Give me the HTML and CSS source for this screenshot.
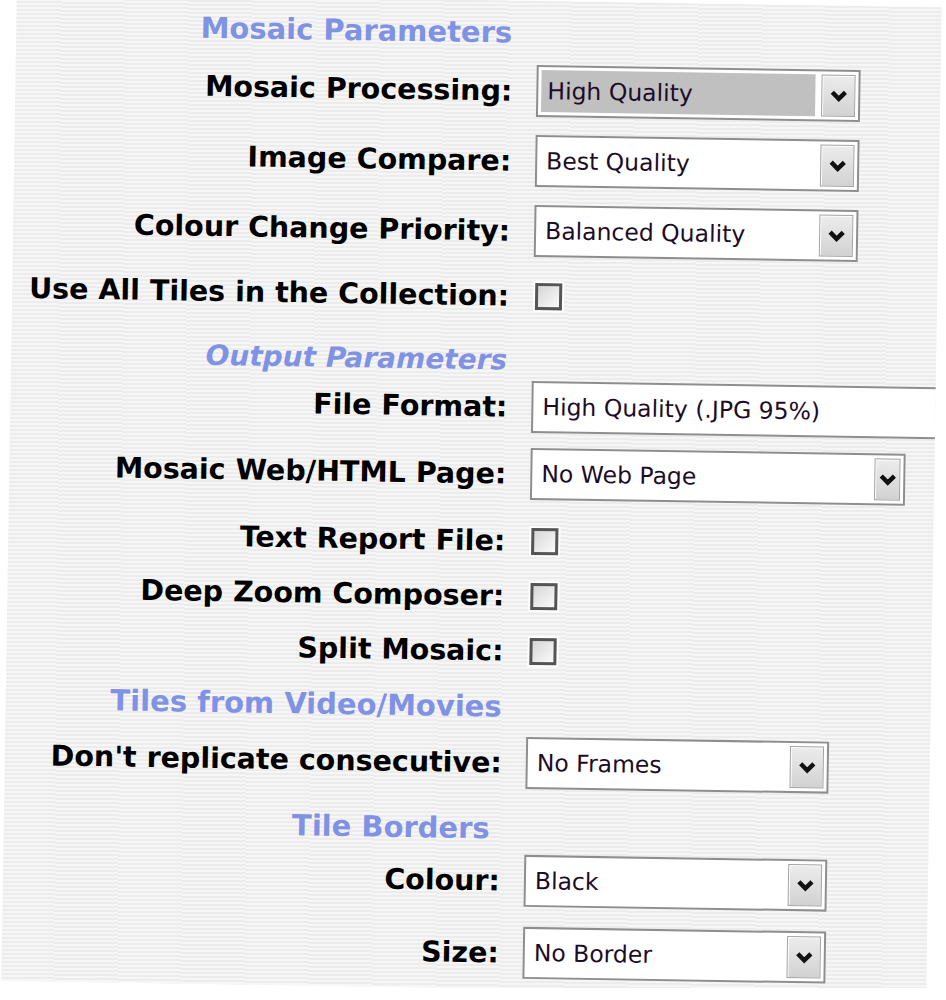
FILE: index.html
```html
<!DOCTYPE html>
<html lang="en">

<head>
    <meta charset="UTF-8">
    <meta name="viewport" content="width=device-width, initial-scale=1.0">
    <title>Mosaic Settings</title>

    <link rel="stylesheet" href="styles.css">
</head>

<body>
    <div class="panel">
        <h2 class="section first">Mosaic Parameters</h2>

        <div class="row r1">
            <label class="label">Mosaic Processing:</label>
            <div class="select focused w323">
                <span class="value">High Quality</span>
                <span class="arrow"><svg viewBox="0 0 16 16"><path d="M3 5 L8 10 L13 5" /></svg></span>
            </div>
        </div>

        <div class="row r2">
            <label class="label">Image Compare:</label>
            <div class="select w323">
                <span class="value">Best Quality</span>
                <span class="arrow"><svg viewBox="0 0 16 16"><path d="M3 5 L8 10 L13 5" /></svg></span>
            </div>
        </div>

        <div class="row r3">
            <label class="label">Colour Change Priority:</label>
            <div class="select w323">
                <span class="value">Balanced Quality</span>
                <span class="arrow"><svg viewBox="0 0 16 16"><path d="M3 5 L8 10 L13 5" /></svg></span>
            </div>
        </div>

        <div class="row check r4">
            <label class="label">Use All Tiles in the Collection:</label>
            <span class="checkbox"></span>
        </div>

        <h2 class="section italic h2">Output Parameters</h2>

        <div class="row r5">
            <label class="label">File Format:</label>
            <div class="textbox">
                <span class="value">High Quality (.JPG 95%)</span>
            </div>
        </div>

        <div class="row r6">
            <label class="label">Mosaic Web/HTML Page:</label>
            <div class="select narrow w375">
                <span class="value">No Web Page</span>
                <span class="arrow"><svg viewBox="0 0 16 16"><path d="M3 5 L8 10 L13 5" /></svg></span>
            </div>
        </div>

        <div class="row check r7">
            <label class="label">Text Report File:</label>
            <span class="checkbox"></span>
        </div>

        <div class="row check r8">
            <label class="label">Deep Zoom Composer:</label>
            <span class="checkbox"></span>
        </div>

        <div class="row check r9">
            <label class="label">Split Mosaic:</label>
            <span class="checkbox"></span>
        </div>

        <h2 class="section h3">Tiles from Video/Movies</h2>

        <div class="row r10">
            <label class="label">Don't replicate consecutive:</label>
            <div class="select w303">
                <span class="value">No Frames</span>
                <span class="arrow"><svg viewBox="0 0 16 16"><path d="M3 5 L8 10 L13 5" /></svg></span>
            </div>
        </div>

        <h2 class="section h4">Tile Borders</h2>

        <div class="row r11">
            <label class="label">Colour:</label>
            <div class="select w303">
                <span class="value">Black</span>
                <span class="arrow"><svg viewBox="0 0 16 16"><path d="M3 5 L8 10 L13 5" /></svg></span>
            </div>
        </div>

        <div class="row r12">
            <label class="label">Size:</label>
            <div class="select w303">
                <span class="value">No Border</span>
                <span class="arrow"><svg viewBox="0 0 16 16"><path d="M3 5 L8 10 L13 5" /></svg></span>
            </div>
        </div>
    </div>
</body>

</html>
```

FILE: styles.css
```css
body {
    margin: 0;
    background: #fff;
    overflow: hidden;
    font-family: 'DejaVu Sans', Verdana, sans-serif;
}

.panel {
    width: 925px;
    height: 988px;
    margin-left: 9px;
    overflow: hidden;
    background: repeating-linear-gradient(to bottom, #ececec 0, #ececec 2px, #f6f6f6 2px, #f6f6f6 4px);
    transform: rotate(0.9deg);
}

.section {
    margin: 0;
    width: 496px;
    height: 40px;
    line-height: 40px;
    text-align: right;
    font-size: 29px;
    font-weight: bold;
    color: #7f92e4;
    white-space: nowrap;
}

.section.italic {
    font-style: italic;
    font-size: 28px;
}

.section.first {
    padding-top: 12px;
}

.h2 {
    margin-top: 25px;
}

.h3 {
    margin-top: 16px;
}

.h4 {
    margin-top: 20px;
    width: 486px;
}

.row {
    display: flex;
    align-items: center;
    gap: 24px;
    height: 52px;
}

.row.check {
    height: 40px;
}

.label {
    width: 497px;
    flex-shrink: 0;
    text-align: right;
    font-size: 28.5px;
    font-weight: bold;
    color: #000;
    white-space: nowrap;
}

.r1 { margin-top: 12px; }
.r2 { margin-top: 18px; }
.r3 { margin-top: 18px; }
.r4 { margin-top: 19px; }
.r5 { margin-top: 0; }
.r6 { margin-top: 15px; }
.r7 { margin-top: 21px; }
.r8 { margin-top: 15px; }
.r9 { margin-top: 15px; }
.r10 { margin-top: 10px; }
.r11 { margin-top: 6px; }
.r12 { margin-top: 20px; }

.select,
.textbox {
    box-sizing: border-box;
    height: 52px;
    display: flex;
    align-items: stretch;
    background: #fff;
    border: 2px solid #8e8e8e;
    padding: 3px;
    flex-shrink: 0;
}

.w323 { width: 324px; }
.w375 { width: 375px; }
.w303 { width: 303px; }

.textbox {
    width: 440px;
    border-right: none;
}

.value {
    flex: 1;
    display: flex;
    align-items: center;
    padding-left: 6px;
    font-size: 23.5px;
    color: #1c0c28;
    white-space: nowrap;
}

.focused .value {
    background: #c0c0c0;
    margin-right: 6px;
}

.arrow {
    width: 34px;
    box-sizing: border-box;
    display: flex;
    align-items: center;
    justify-content: center;
    background: linear-gradient(to bottom, #ececec, #d2d2d2);
    border: 1px solid #a4a4a4;
    box-shadow: inset 1px 1px 0 #fff;
}

.narrow .arrow {
    width: 26px;
}

.arrow svg {
    width: 21px;
    height: 21px;
}

.arrow path {
    fill: none;
    stroke: #111;
    stroke-width: 3.4;
}

.checkbox {
    box-sizing: border-box;
    width: 27px;
    height: 27px;
    border: 3px solid #555;
    background: linear-gradient(135deg, #d6d6d6, #fbfbfb);
    box-shadow: 0 0 0 2px #fff;
    margin-left: 2px;
}
```
